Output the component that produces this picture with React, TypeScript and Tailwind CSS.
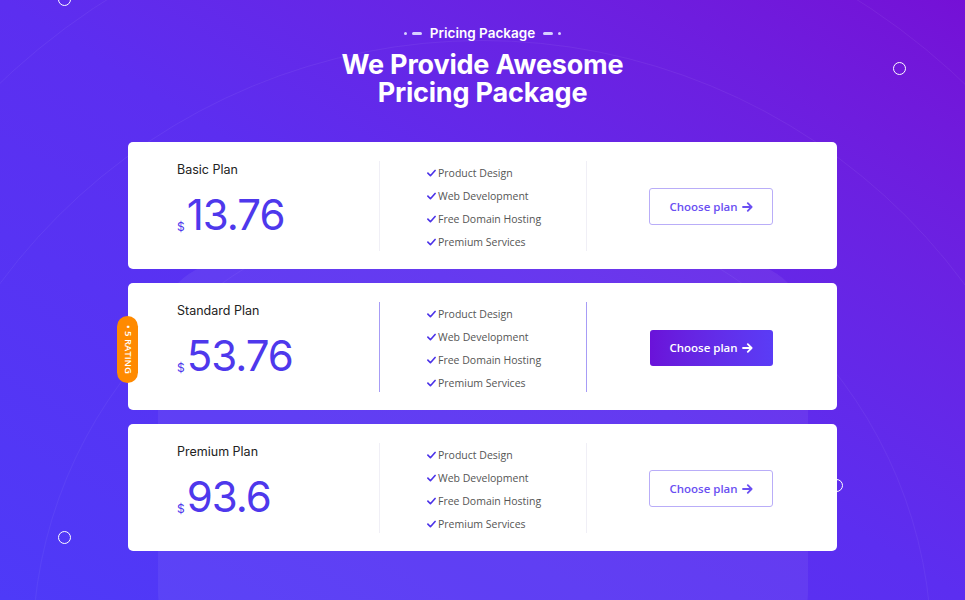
import React from "react";

const features = ["Product Design", "Web Development", "Free Domain Hosting", "Premium Services"];

function Check() {
  return (
    <svg width="9" height="8" viewBox="0 0 10 8" className="shrink-0">
      <path d="M1 4.2 L3.8 7 L9 1.2" fill="none" stroke="#4b32e8" strokeWidth="1.8" strokeLinecap="round" strokeLinejoin="round" />
    </svg>
  );
}

function Arrow() {
  return (
    <svg width="11" height="10" viewBox="0 0 11 10" className="ml-[4px]">
      <path d="M1 5 H9.5 M5.8 1.2 L9.6 5 L5.8 8.8" fill="none" stroke="currentColor" strokeWidth="1.8" strokeLinecap="round" strokeLinejoin="round" />
    </svg>
  );
}

function Card({ name, price, featured }: { name: string; price: string; featured?: boolean }) {
  const divider = featured ? "bg-[#a79cf6]" : "bg-[#f0eff6]";
  return (
    <div className="relative h-[127px] w-[709px] rounded-[5px] bg-white grid grid-cols-[251px_1px_206px_1px_250px] items-center">
      {featured && (
        <div className="absolute left-[-11px] top-[33px] h-[67px] w-[21px] rounded-full bg-[#ff8a00] flex items-center justify-center">
          <span
            className="text-white text-[9.5px] font-semibold whitespace-nowrap"
            style={{ writingMode: "vertical-rl", fontFamily: "'Open Sans', sans-serif" }}
          >
            • 5 RATING
          </span>
        </div>
      )}
      <div className="pl-[49px] self-start pt-[20px]" style={{ fontFamily: "Inter, 'Noto Sans', sans-serif" }}>
        <div className="text-[12.5px] text-[#222] leading-[16px]">{name}</div>
        <div className="flex items-end mt-[17px] text-[#4e38ec]">
          <span className="text-[12px] leading-[12px] mb-[2px] mr-[2px]">$</span>
          <span className="text-[42px] leading-[40px] tracking-[-1px]">{price}</span>
        </div>
      </div>
      <div className={`h-[90px] w-px ${divider}`} />
      <div className="pl-[47px] pt-[4px] flex flex-col gap-[7px]" style={{ fontFamily: "'Open Sans', sans-serif" }}>
        {features.map((f) => (
          <div key={f} className="flex items-center gap-[2px] text-[10.5px] leading-[16px] text-[#555]">
            <Check />
            <span>{f}</span>
          </div>
        ))}
      </div>
      <div className={`h-[90px] w-px ${divider}`} />
      <div className="flex justify-center pr-[2px] pt-[2px]">
        {featured ? (
          <div
            className="h-[36px] w-[123px] rounded-[3px] bg-gradient-to-r from-[#6a12d9] to-[#5a3cf6] text-white flex items-center justify-center text-[11.5px] font-semibold"
            style={{ fontFamily: "'Open Sans', sans-serif" }}
          >
            Choose plan
            <Arrow />
          </div>
        ) : (
          <div
            className="h-[37px] w-[124px] rounded-[3px] border border-[#b9adf8] text-[#6a4ff2] flex items-center justify-center text-[11.5px] font-semibold"
            style={{ fontFamily: "'Open Sans', sans-serif" }}
          >
            Choose plan
            <Arrow />
          </div>
        )}
      </div>
    </div>
  );
}

function Ring({ className }: { className: string }) {
  return <div className={`absolute h-[13px] w-[13px] rounded-full border-[1.5px] border-white ${className}`} />;
}

export default function App() {
  return (
    <div className="relative h-[600px] w-[965px] overflow-hidden bg-gradient-to-tr from-[#4e3af8] via-[#5c2ef0] to-[#7510d6]">
      {/* decorative circles */}
      <div className="absolute left-[-218px] top-[-110px] h-[1400px] w-[1400px] rounded-full border border-white/[0.06]" />
      <div className="absolute left-[-118px] top-[40px] h-[1200px] w-[1200px] rounded-full border border-white/[0.06]" />
      <div className="absolute left-[32px] top-[200px] h-[900px] w-[900px] rounded-full border border-white/[0.05]" />
      <div className="absolute left-[158px] top-[262px] h-[400px] w-[650px] rounded-[70px] bg-white/[0.06]" />
      <Ring className="left-[58px] top-[-7px]" />
      <Ring className="left-[893px] top-[62px]" />
      <Ring className="left-[58px] top-[531px]" />
      <Ring className="left-[830px] top-[479px]" />

      <div className="relative flex flex-col items-center pt-[23px]">
        <div className="flex items-center gap-[8px] text-white" style={{ fontFamily: "Inter, 'Noto Sans', sans-serif" }}>
          <div className="flex items-center gap-[5px]">
            <div className="h-[3px] w-[3px] rounded-full bg-[#d7d0ff]" />
            <div className="h-[3px] w-[10px] rounded-full bg-[#d7d0ff]" />
          </div>
          <span className="text-[13.5px] font-semibold leading-[20px]">Pricing Package</span>
          <div className="flex items-center gap-[5px]">
            <div className="h-[3px] w-[10px] rounded-full bg-[#d7d0ff]" />
            <div className="h-[3px] w-[3px] rounded-full bg-[#d7d0ff]" />
          </div>
        </div>
        <h1
          className="mt-[8px] text-center text-white text-[27px] font-bold leading-[28px] tracking-[-0.2px]"
          style={{ fontFamily: "Inter, 'Noto Sans', sans-serif" }}
        >
          We Provide Awesome
          <br />
          Pricing Package
        </h1>
        <div className="mt-[35px] flex flex-col gap-[14px]">
          <Card name="Basic Plan" price="13.76" />
          <Card name="Standard Plan" price="53.76" featured />
          <Card name="Premium Plan" price="93.6" />
        </div>
      </div>
    </div>
  );
}
